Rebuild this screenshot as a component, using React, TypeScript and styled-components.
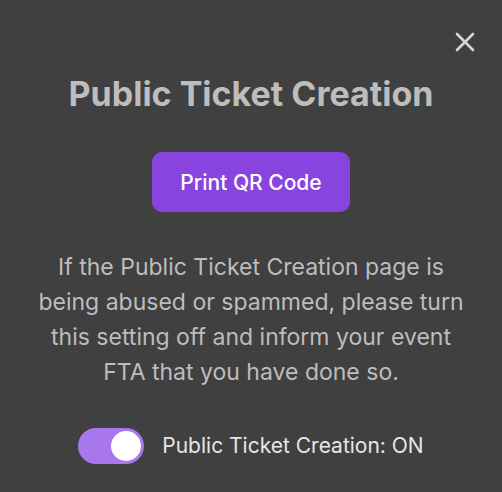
import React, { useState } from "react";
import styled, { createGlobalStyle } from "styled-components";

const Global = createGlobalStyle`
  html, body { margin: 0; padding: 0; background: #404040; }
  body { font-family: Inter, "Noto Sans", sans-serif; }
`;

const Modal = styled.div`
  position: relative;
  width: 502px;
  height: 492px;
  background: #404040;
  display: flex;
  flex-direction: column;
  align-items: center;
  box-sizing: border-box;
  padding-top: 73px;
`;

const Close = styled.button`
  position: absolute;
  top: 30px;
  right: 25px;
  width: 24px;
  height: 24px;
  padding: 0;
  border: none;
  background: transparent;
  display: flex;
  align-items: center;
  justify-content: center;
  cursor: pointer;
`;

const Title = styled.h1`
  margin: 0;
  font-size: 34px;
  font-weight: 700;
  line-height: 42px;
  color: #bdbdbd;
  letter-spacing: 0;
`;

const PrintButton = styled.button`
  margin-top: 37px;
  width: 198px;
  height: 60px;
  border: none;
  border-radius: 10px;
  background: #8944e0;
  color: #ffffff;
  font-family: Inter, sans-serif;
  font-size: 21px;
  font-weight: 500;
  cursor: pointer;
`;

const Body = styled.p`
  margin: 38px 0 0;
  width: 440px;
  text-align: center;
  font-size: 23px;
  line-height: 35px;
  color: #bdbdbd;
`;

const ToggleRow = styled.label`
  margin-top: 38px;
  display: flex;
  align-items: center;
  gap: 18px;
  cursor: pointer;
`;

const Track = styled.span<{ $on: boolean }>`
  width: 66px;
  height: 36px;
  border-radius: 18px;
  background: ${(p) => (p.$on ? "#a877ec" : "#777")};
  display: flex;
  align-items: center;
  justify-content: ${(p) => (p.$on ? "flex-end" : "flex-start")};
  padding: 0 3px;
  box-sizing: border-box;
`;

const Knob = styled.span`
  width: 30px;
  height: 30px;
  border-radius: 50%;
  background: #ffffff;
`;

const ToggleLabel = styled.span`
  font-size: 21px;
  color: #e6e6e6;
  line-height: 24px;
`;

export default function App() {
  const [on, setOn] = useState(true);
  return (
    <>
      <Global />
      <Modal>
        <Close aria-label="Close">
          <svg width="20" height="20" viewBox="0 0 20 20">
            <path d="M2 2 L18 18 M18 2 L2 18" stroke="#d6d6d6" strokeWidth="2.6" strokeLinecap="round" />
          </svg>
        </Close>
        <Title>Public Ticket Creation</Title>
        <PrintButton>Print QR Code</PrintButton>
        <Body>
          If the Public Ticket Creation page is being abused or spammed, please turn this setting off and inform your event FTA that you have done so.
        </Body>
        <ToggleRow onClick={() => setOn(!on)}>
          <Track $on={on}>
            <Knob />
          </Track>
          <ToggleLabel>Public Ticket Creation: {on ? "ON" : "OFF"}</ToggleLabel>
        </ToggleRow>
      </Modal>
    </>
  );
}
